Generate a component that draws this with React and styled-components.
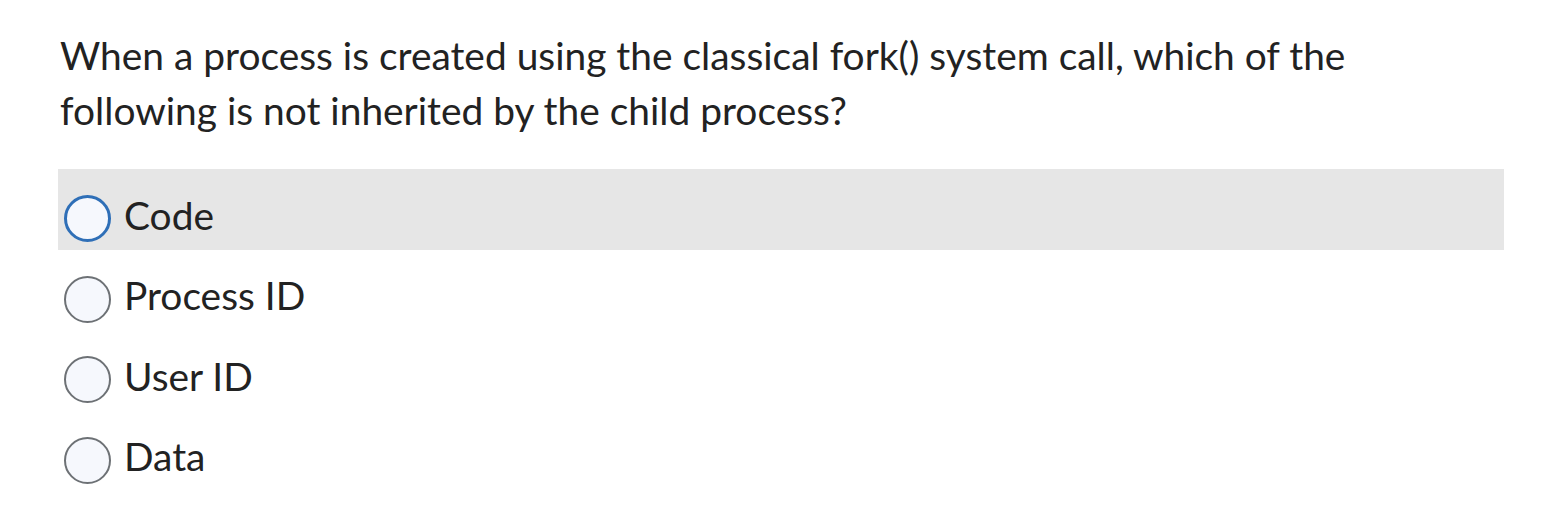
import React from "react";
import styled, { createGlobalStyle } from "styled-components";

const GlobalStyle = createGlobalStyle`
  body {
    margin: 0;
    background: #fff;
    font-family: Lato, "Liberation Sans", sans-serif;
    color: #222;
  }
`;

const Wrap = styled.div`
  box-sizing: border-box;
  width: 1566px;
  height: 522px;
  padding: 27.5px 62px 0 58px;
`;

const Question = styled.p`
  margin: 0 0 31.5px 2px;
  font-size: 38.9px;
  line-height: 55px;
`;

const Options = styled.div`
  display: flex;
  flex-direction: column;
`;

const Row = styled.label`
  box-sizing: border-box;
  display: flex;
  align-items: center;
  gap: 13px;
  height: 80.5px;
  padding: 19px 0 0 6px;
  background: ${(p) => (p.$active ? "#e6e6e6" : "transparent")};
`;

const Radio = styled.span`
  box-sizing: border-box;
  flex: none;
  width: 47px;
  height: 47px;
  border-radius: 50%;
  background: #f6f8fd;
  border: ${(p) => (p.$active ? "3.5px solid #2f6fb7" : "2px solid #6d7175")};
`;

const Label = styled.span`
  font-size: 38.9px;
  line-height: 46px;
  margin-bottom: 8px;
`;

const options = ["Code", "Process ID", "User ID", "Data"];

export default () => (
  <Wrap>
    <GlobalStyle />
    <Question>
      When a process is created using the classical fork() system call, which of the
      <br />
      following is not inherited by the child process?
    </Question>
    <Options>
      {options.map((o, i) => (
        <Row key={o} $active={i === 0}>
          <Radio $active={i === 0} />
          <Label>{o}</Label>
        </Row>
      ))}
    </Options>
  </Wrap>
);
